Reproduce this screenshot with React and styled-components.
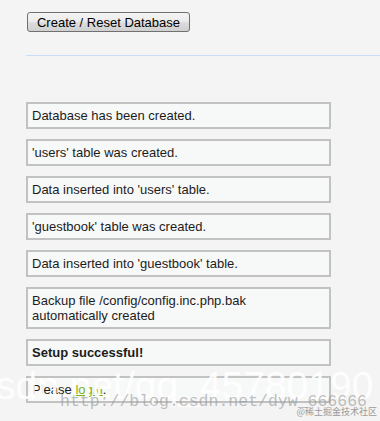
import React from "react";
import styled, { createGlobalStyle } from "styled-components";

const Global = createGlobalStyle`
  html, body { margin: 0; padding: 0; background: #f4f4f4; }
  body { font-family: "Liberation Sans", Arial, sans-serif; font-size: 13px; color: #1c1c1c; }
`;

const Page = styled.div`
  position: relative;
  height: 421px;
  overflow: hidden;
  padding: 12px 0 0 26px;
  box-sizing: border-box;
`;

const Button = styled.button`
  margin-left: 1px;
  height: 20px;
  width: 163px;
  padding: 0 8px;
  border: 1px solid #707070;
  border-radius: 3px;
  background: linear-gradient(#f4f4f4 0%, #ececec 45%, #dcdcdc 55%, #d0d0d0 100%);
  font-family: "Liberation Sans", Arial, sans-serif;
  font-size: 13px;
  color: #000;
  line-height: 17px;
  box-sizing: border-box;
`;

const Rule = styled.hr`
  margin: 23px 0 0 0;
  border: 0;
  height: 1px;
  background: #c9dbf6;
`;

const List = styled.div`
  display: flex;
  flex-direction: column;
  gap: 10px;
  margin-top: 46px;
  width: 305px;
`;

const Message = styled.div`
  border: 2px solid #c2c2c2;
  background: #f7f8f8;
  padding: 4px 4px;
  line-height: 15px;
  font-size: 13px;
  font-weight: ${(p) => (p.$bold ? "bold" : "normal")};
  color: #1c1c1c;
`;

const Link = styled.a`
  color: #7cb31c;
  text-decoration: underline;
`;

const MarkBig = styled.div`
  position: absolute;
  left: -4px;
  top: 364px;
  font-family: "Liberation Sans", Arial, sans-serif;
  font-size: 39px;
  line-height: 44px;
  color: rgba(255, 255, 255, 0.92);
  white-space: nowrap;
  pointer-events: none;
`;

const MarkUrl = styled.div`
  position: absolute;
  left: 60px;
  top: 393px;
  font-family: "Liberation Mono", "Courier New", monospace;
  font-size: 16.5px;
  line-height: 18px;
  color: rgba(150, 150, 150, 0.6);
  white-space: nowrap;
  pointer-events: none;
`;

const MarkBrand = styled.div`
  position: absolute;
  right: 3px;
  top: 406px;
  font-family: "Noto Sans CJK SC", sans-serif;
  font-size: 9px;
  line-height: 11px;
  color: #9a9a9a;
  white-space: nowrap;
  pointer-events: none;
`;

export default function App() {
  return (
    <>
      <Global />
      <Page>
        <Button>Create / Reset Database</Button>
        <Rule />
        <List>
          <Message>Database has been created.</Message>
          <Message>'users' table was created.</Message>
          <Message>Data inserted into 'users' table.</Message>
          <Message>'guestbook' table was created.</Message>
          <Message>Data inserted into 'guestbook' table.</Message>
          <Message>
            Backup file /config/config.inc.php.bak
            <br />
            automatically created
          </Message>
          <Message $bold>Setup successful!</Message>
          <Message>
            Please <Link href="#">login</Link>.
          </Message>
        </List>
        <MarkBig>sdn.net/qq_45780190</MarkBig>
        <MarkUrl>http://blog.csdn.net/dyw_666666</MarkUrl>
        <MarkBrand>@稀土掘金技术社区</MarkBrand>
      </Page>
    </>
  );
}
